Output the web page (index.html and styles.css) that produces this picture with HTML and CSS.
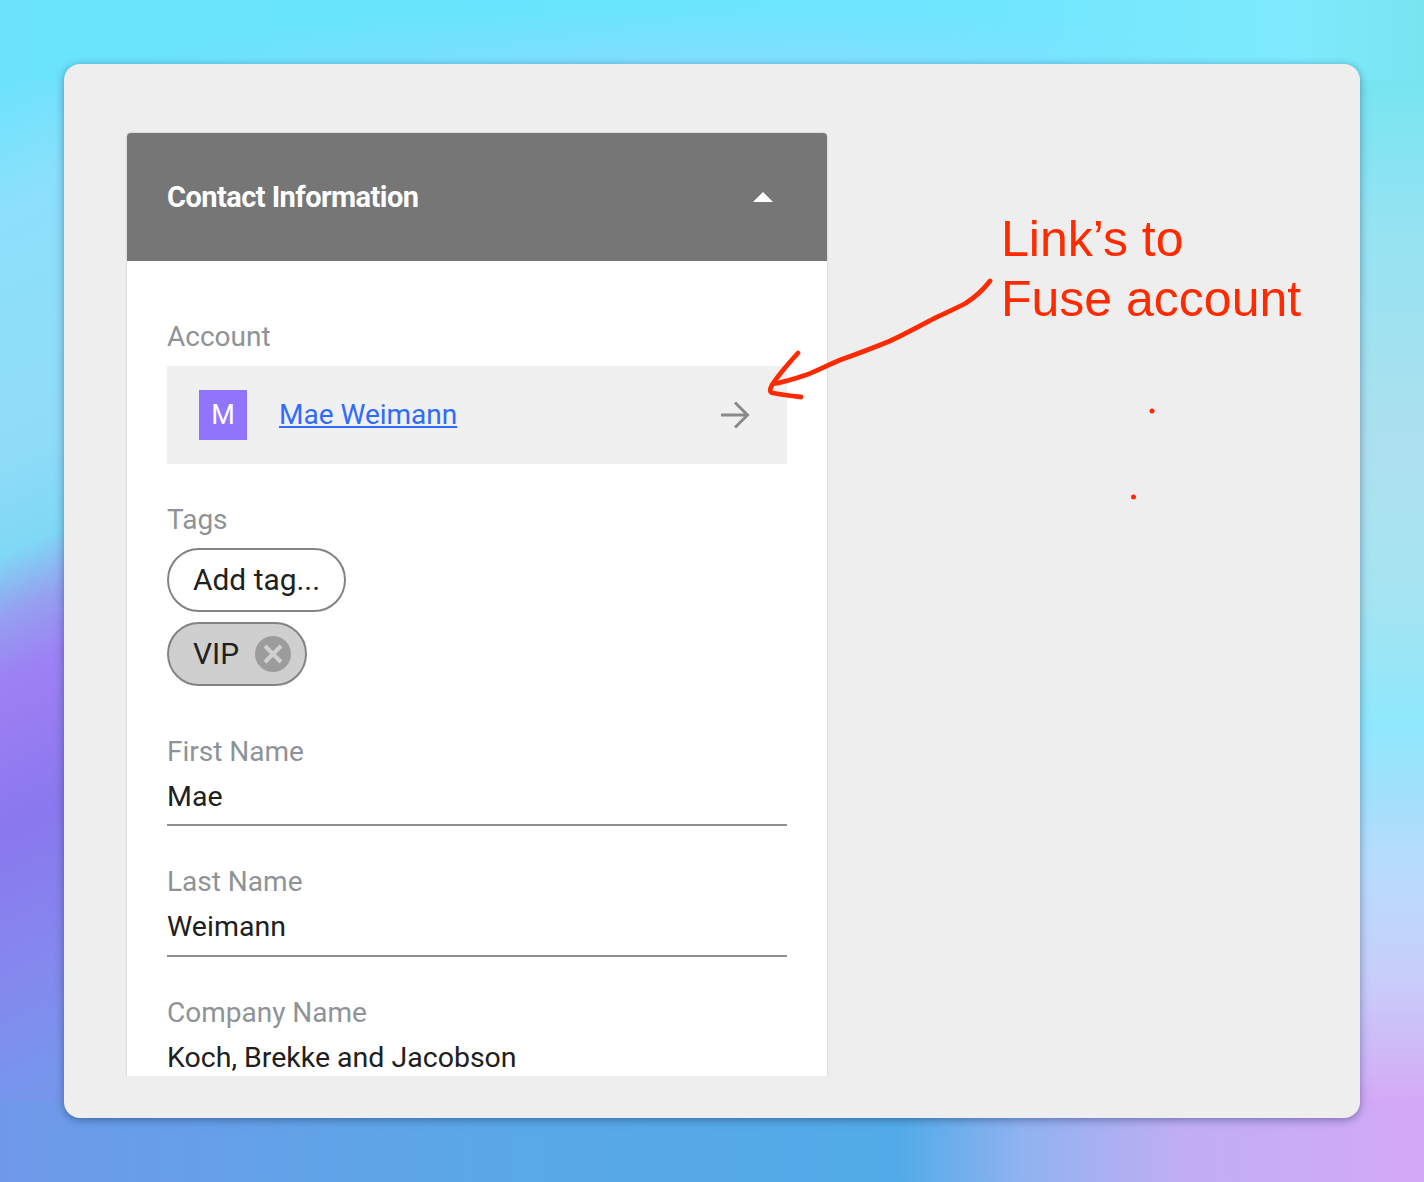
FILE: index.html
```html
<!DOCTYPE html>
<html lang="en">
<head>
<meta charset="utf-8">
<title>Contact Information</title>
<link rel="stylesheet" href="styles.css">
</head>
<body>
<main class="window">
  <section class="card">
    <header class="card-head">
      <h2 class="card-title">Contact Information</h2>
      <svg class="caret" width="20" height="10" viewBox="0 0 20 10"><path d="M10 0 L20 10 L0 10 Z" fill="#fff"/></svg>
    </header>
    <div class="card-body">
      <div class="field-account">
        <div class="label">Account</div>
        <div class="account-row">
          <span class="avatar">M</span>
          <a class="account-link" href="#">Mae Weimann</a>
          <svg class="go" width="30" height="30" viewBox="0 0 30 30" fill="none" stroke="#8a8a8a" stroke-width="3"><path d="M1 15 H27"/><path d="M15 2.500 L27.500 15 L15 27.500"/></svg>
        </div>
      </div>
      <div class="field-tags">
        <div class="label">Tags</div>
        <div class="tags">
          <span class="tag">Add tag...</span>
          <span class="tag tag-on">VIP
            <svg class="tag-x" width="36" height="36" viewBox="0 0 36 36"><circle cx="18" cy="18" r="18" fill="#9c9c9c"/><path d="M10 10 L26 26 M26 10 L10 26" stroke="#d0d0d0" stroke-width="4"/></svg>
          </span>
        </div>
      </div>
      <div class="field">
        <div class="label">First Name</div>
        <div class="value">Mae</div>
      </div>
      <div class="field">
        <div class="label">Last Name</div>
        <div class="value">Weimann</div>
      </div>
      <div class="field">
        <div class="label">Company Name</div>
        <div class="value">Koch, Brekke and Jacobson</div>
      </div>
    </div>
  </section>
  <p class="note">Link’s to<br>Fuse account</p>
  <svg class="ink" width="1424" height="1182" viewBox="0 0 1424 1182" fill="none" stroke="#ff2a00" stroke-linecap="round" stroke-linejoin="round">
    <path stroke-width="4.800" d="M990 281 C983 290 977 296 966 303 C955 309 945 313 933 319 C918 327 905 334 890 341 C873 348 857 354 840 360 C828 365 817 371 806 375 C794 379 784 382 773 384"/>
    <path stroke-width="4.800" d="M798 353 C788 364 779 374 772 385 C770 389 769 392 773 393 C783 395 792 396 801 397"/>
    <circle cx="1152" cy="411" r="2.500" fill="#ff2a00" stroke="none"/>
    <circle cx="1133.500" cy="497" r="2.500" fill="#ff2a00" stroke="none"/>
  </svg>
</main>
</body>
</html>
```
FILE: styles.css
```css
* { box-sizing: border-box; }
html, body { height: 100%; }
body {
  margin: 0;
  height: 1182px;
  padding: 64px;
  overflow: hidden;
  font-family: Roboto, "Liberation Sans", sans-serif;
  background-color: #7fe4fa;
  background-repeat: no-repeat;
  background-image:
    radial-gradient(ellipse 560px 64px at 680px 72px, rgba(150, 215, 255, .6) 0, rgba(150, 215, 255, 0) 100%),
    linear-gradient(90deg, #6be3fd 0, #68e5fe 500px, #70e6fe 1000px, #7eeafd 1300px, #76e5f0 1424px),
    linear-gradient(90deg, #7098ea 0, #6a9de8 100px, #5aa8e8 500px, #52abe8 900px, #8fb2f0 1020px, #c0aef4 1180px, #d4a8f6 1424px),
    linear-gradient(155deg, #6be3fd 0, #6be3fd 72px, #8ce0fb 190px, #90dcf8 408px, #7fd8f5 505px, #95a0f0 560px, #9c82f4 615px, #9a7ef2 650px, #8a78ee 752px, #8588ee 888px, #7696ec 1000px, #7098ea 1105px),
    linear-gradient(180deg, #76e5f0 0, #76e5f0 80px, #95e3f2 226px, #ade0ee 452px, #a4e4f2 603px, #8ee8fb 723px, #a0e0fb 791px, #b8dcfb 867px, #c8cdf9 980px, #d0b4f6 1070px, #d4a8f6 1102px, #d4a8f6 1182px);
  background-size: 100% 80px, 100% 80px, 100% 80px, 64px 100%, 64px 100%;
  background-position: left top, left top, left bottom, left top, right top;
}
.window {
  height: 1054px;
  background: #eeeeee;
  border-radius: 16px;
  padding: 69px 533px 42px 63px;
  box-shadow: 0 2px 9px rgba(20, 40, 90, .45);
}
.card {
  width: 700px;
  height: 943px;
  overflow: hidden;
  background: #fff;
  border-radius: 4px 4px 0 0;
  box-shadow: 0 0 2px rgba(0, 0, 0, .25);
  clip-path: inset(-4px -4px 0 -4px);
}
.card-head {
  height: 128px;
  background: #767676;
  padding: 0 54px 0 40px;
  display: flex;
  align-items: center;
  justify-content: space-between;
}
.card-title {
  margin: -1px 0 0;
  color: #fff;
  font-size: 29px;
  font-weight: 700;
  letter-spacing: -.55px;
}
.caret { margin-top: -1px; }
.card-body { padding: 58px 40px 0; }
.label {
  color: #8e9397;
  font-size: 28px;
  line-height: 36px;
}
.account-row {
  margin-top: 11px;
  height: 98px;
  background: #f0f0f0;
  display: flex;
  align-items: center;
  padding: 0 37px 0 32px;
}
.avatar {
  width: 48px;
  height: 50px;
  background: #9176fd;
  color: #fff;
  font-size: 27px;
  display: flex;
  align-items: center;
  justify-content: center;
}
.account-link {
  margin: -2px 0 0 32px;
  color: #2f6bff;
  font-size: 28px;
  flex: 1;
}
.field-tags { margin-top: 38px; }
.tags {
  margin-top: 10px;
  display: flex;
  flex-direction: column;
  align-items: flex-start;
  gap: 10px;
}
.tag {
  height: 64px;
  border: 2px solid #838383;
  border-radius: 32px;
  padding: 0 24px 2px;
  display: flex;
  align-items: center;
  color: #202020;
  font-size: 29.900px;
}
.tag-on {
  background: #cfcfcf;
  padding: 0 14px 2px 24px;
  gap: 16px;
}
.tag-x { margin-bottom: -2px; }
.field { margin-top: 47.500px; }
.field + .field { margin-top: 38px; }
.value {
  height: 56.500px;
  padding-top: 9px;
  color: #202020;
  font-size: 28.500px;
  line-height: 36px;
  border-bottom: 2px solid #8f8f8f;
}
.field:last-child .value { border-bottom: 0; }
.note {
  position: absolute;
  left: 1001px;
  top: 209px;
  margin: 0;
  color: #ff2a00;
  font-family: "Liberation Sans", Arial, sans-serif;
  font-size: 50px;
  line-height: 60px;
}
.ink {
  position: absolute;
  left: 0;
  top: 0;
  pointer-events: none;
}
```
